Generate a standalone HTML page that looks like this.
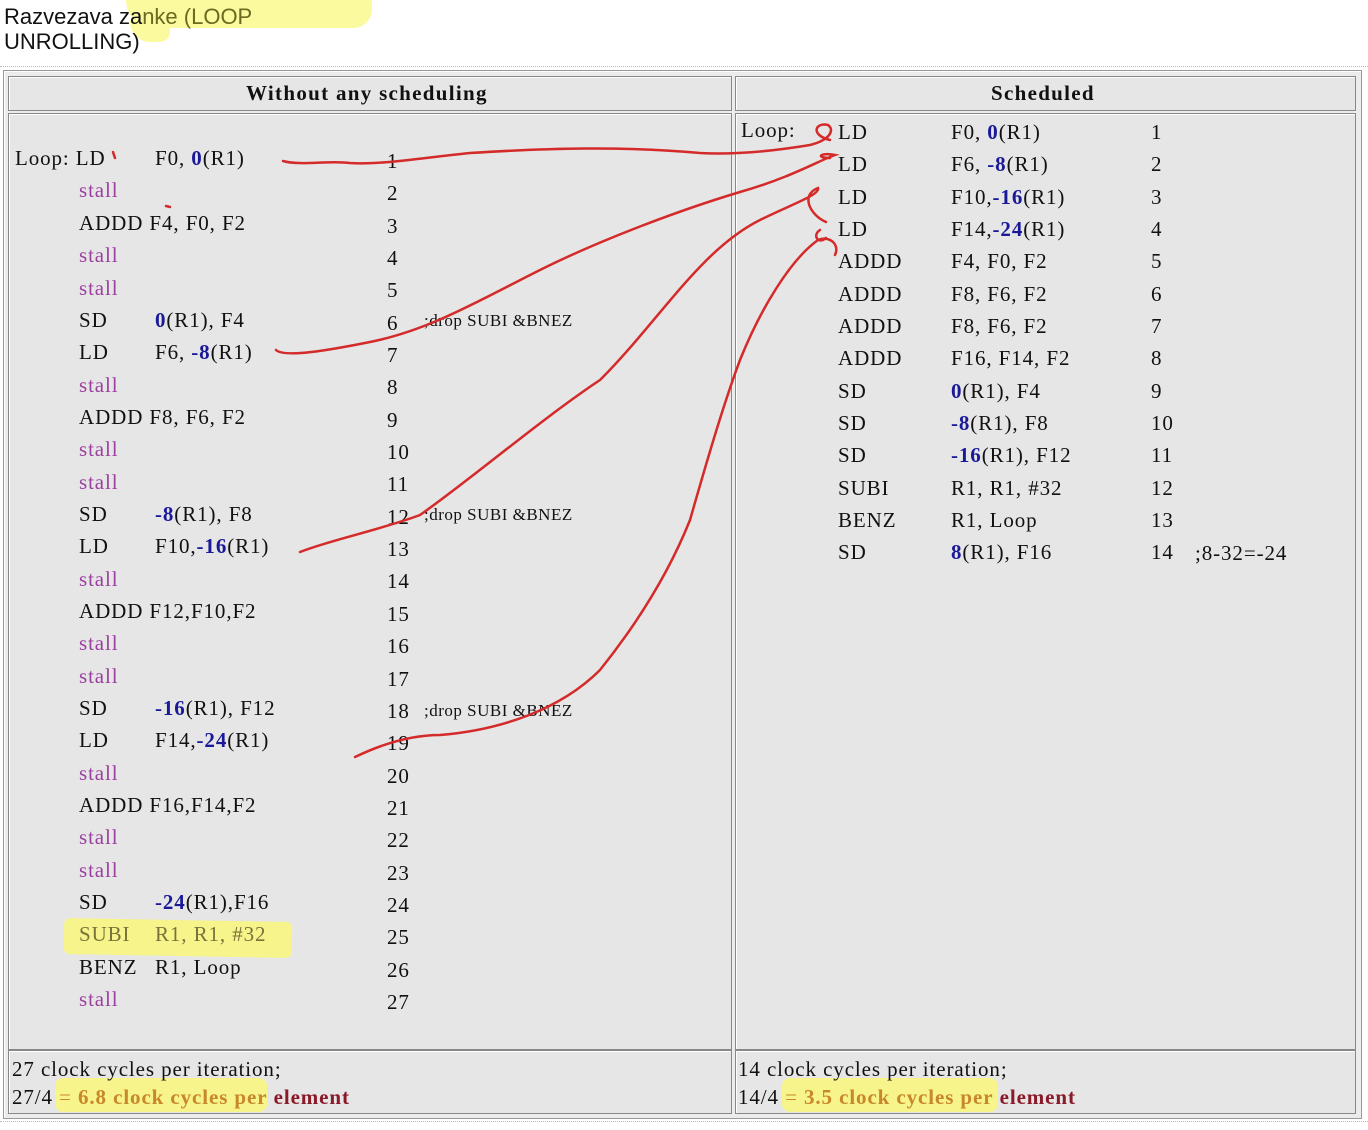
<!DOCTYPE html>
<html><head><meta charset="utf-8"><style>
body{margin:0;width:1368px;height:1130px;background:#fff;position:relative;overflow:hidden;font-family:"Liberation Serif",serif;color:#111}
.a{position:absolute;white-space:nowrap;font-size:21px;line-height:26px;letter-spacing:0.9px}
.s{color:#9b3fa0}.b{color:#1a1a99;font-weight:bold}
.box{position:absolute;background:#e6e6e6;border:1px solid #888;box-shadow:inset 1px 1px 0 #fff}
</style></head><body>
<div style="position:absolute;left:126px;top:0;width:246px;height:28px;background:#fbfa9e;border-radius:0 0 20px 30px"></div>
<div style="position:absolute;left:130px;top:20px;width:40px;height:22px;background:#fbfa9e;border-radius:0 0 10px 20px"></div>
<div class="a" style="left:4px;top:4px;font-family:'Liberation Sans',sans-serif;font-size:22px;line-height:25px;letter-spacing:0">Razvezava za<span style="color:#6a6a20">nke (LOOP</span><br>UNROLLING)</div>
<div style="position:absolute;left:0;top:66px;width:1368px;border-top:1px dotted #bbb"></div>
<div style="position:absolute;left:0;top:1121px;width:1368px;border-top:1px dotted #bbb"></div>
<div class="box" style="left:3px;top:70px;width:1357px;height:1047px;background:#ececec;border-color:#999"></div>
<div class="box" style="left:8px;top:76px;width:722px;height:33px"></div>
<div class="box" style="left:735px;top:76px;width:619px;height:33px"></div>
<div class="box" style="left:8px;top:113px;width:722px;height:935px"></div>
<div class="box" style="left:735px;top:113px;width:619px;height:935px"></div>
<div class="box" style="left:8px;top:1050px;width:722px;height:62px"></div>
<div class="box" style="left:735px;top:1050px;width:619px;height:62px"></div>
<div class="a" style="left:246px;top:80px;font-weight:bold;letter-spacing:1.3px">Without any scheduling</div>
<div class="a" style="left:991px;top:80px;font-weight:bold;letter-spacing:1.3px">Scheduled</div>
<div style="position:absolute;left:64px;top:920px;width:228px;height:36px;background:#f6f48a;border-radius:6px;transform:rotate(1deg)"></div>
<div style="position:absolute;left:55px;top:1078px;width:212px;height:34px;background:#f6f48a;border-radius:8px"></div>
<div style="position:absolute;left:782px;top:1078px;width:216px;height:34px;background:#f6f48a;border-radius:8px"></div>
<div class="a" style="left:15px;top:145px">Loop: LD</div>
<div class="a" style="left:155px;top:145px">F0, <span class="b">0</span>(R1)</div>
<div class="a s" style="left:79px;top:177px">stall</div>
<div class="a" style="left:79px;top:210px">ADDD F4, F0, F2</div>
<div class="a s" style="left:79px;top:242px">stall</div>
<div class="a s" style="left:79px;top:275px">stall</div>
<div class="a" style="left:79px;top:307px">SD</div><div class="a" style="left:155px;top:307px"><span class="b">0</span>(R1), F4</div>
<div class="a" style="left:79px;top:339px">LD</div><div class="a" style="left:155px;top:339px">F6, <span class="b">-8</span>(R1)</div>
<div class="a s" style="left:79px;top:372px">stall</div>
<div class="a" style="left:79px;top:404px">ADDD F8, F6, F2</div>
<div class="a s" style="left:79px;top:436px">stall</div>
<div class="a s" style="left:79px;top:469px">stall</div>
<div class="a" style="left:79px;top:501px">SD</div><div class="a" style="left:155px;top:501px"><span class="b">-8</span>(R1), F8</div>
<div class="a" style="left:79px;top:533px">LD</div><div class="a" style="left:155px;top:533px">F10,<span class="b">-16</span>(R1)</div>
<div class="a s" style="left:79px;top:566px">stall</div>
<div class="a" style="left:79px;top:598px">ADDD F12,F10,F2</div>
<div class="a s" style="left:79px;top:630px">stall</div>
<div class="a s" style="left:79px;top:663px">stall</div>
<div class="a" style="left:79px;top:695px">SD</div><div class="a" style="left:155px;top:695px"><span class="b">-16</span>(R1), F12</div>
<div class="a" style="left:79px;top:727px">LD</div><div class="a" style="left:155px;top:727px">F14,<span class="b">-24</span>(R1)</div>
<div class="a s" style="left:79px;top:760px">stall</div>
<div class="a" style="left:79px;top:792px">ADDD F16,F14,F2</div>
<div class="a s" style="left:79px;top:824px">stall</div>
<div class="a s" style="left:79px;top:857px">stall</div>
<div class="a" style="left:79px;top:889px">SD</div><div class="a" style="left:155px;top:889px"><span class="b">-24</span>(R1),F16</div>
<div class="a" style="left:79px;top:921px;color:#77733a">SUBI</div><div class="a" style="left:155px;top:921px;color:#77733a">R1, R1, #32</div>
<div class="a" style="left:79px;top:954px">BENZ</div><div class="a" style="left:155px;top:954px">R1, Loop</div>
<div class="a s" style="left:79px;top:986px">stall</div>
<div class="a" style="left:387px;top:145px;line-height:32.35px">1<br>2<br>3<br>4<br>5<br>6<br>7<br>8<br>9<br>10<br>11<br>12<br>13<br>14<br>15<br>16<br>17<br>18<br>19<br>20<br>21<br>22<br>23<br>24<br>25<br>26<br>27</div>
<div class="a" style="left:424px;top:308px;font-size:17px;letter-spacing:0.5px">;drop SUBI &amp;BNEZ</div>
<div class="a" style="left:424px;top:502px;font-size:17px;letter-spacing:0.5px">;drop SUBI &amp;BNEZ</div>
<div class="a" style="left:424px;top:698px;font-size:17px;letter-spacing:0.5px">;drop SUBI &amp;BNEZ</div>
<div class="a" style="left:741px;top:117px">Loop:</div>
<div class="a" style="left:838px;top:116px;line-height:32.35px">LD<br>LD<br>LD<br>LD<br>ADDD<br>ADDD<br>ADDD<br>ADDD<br>SD<br>SD<br>SD<br>SUBI<br>BENZ<br>SD</div>
<div class="a" style="left:951px;top:116px;line-height:32.35px">F0, <span class="b">0</span>(R1)<br>F6, <span class="b">-8</span>(R1)<br>F10,<span class="b">-16</span>(R1)<br>F14,<span class="b">-24</span>(R1)<br>F4, F0, F2<br>F8, F6, F2<br>F8, F6, F2<br>F16, F14, F2<br><span class="b">0</span>(R1), F4<br><span class="b">-8</span>(R1), F8<br><span class="b">-16</span>(R1), F12<br>R1, R1, #32<br>R1, Loop<br><span class="b">8</span>(R1), F16</div>
<div class="a" style="left:1151px;top:116px;line-height:32.35px">1<br>2<br>3<br>4<br>5<br>6<br>7<br>8<br>9<br>10<br>11<br>12<br>13<br>14</div>
<div class="a" style="left:1195px;top:540px">;8-32=-24</div>
<div class="a" style="left:12px;top:1055px;line-height:28px">27 clock cycles per iteration;<br>27/4 <span style="color:#c8872a;font-weight:bold"><span style="font-weight:normal">=</span> 6.8 clock cycles per</span> <b style="color:#8a1a2a">element</b></div>
<div class="a" style="left:738px;top:1055px;line-height:28px">14 clock cycles per iteration;<br>14/4 <span style="color:#c8872a;font-weight:bold"><span style="font-weight:normal">=</span> 3.5 clock cycles per</span> <b style="color:#8a1a2a">element</b></div>
<svg style="position:absolute;left:0;top:0" width="1368" height="1130" fill="none" stroke="#d42a2a" stroke-width="2.5" stroke-linecap="round">
<path d="M283 161 C300 166 330 160 350 163 C380 165 420 158 470 153 C550 148 620 146 700 153 C740 155 780 150 810 145 C830 140 835 130 828 125 C815 122 810 135 830 140"/>
<path d="M276 350 C285 358 330 350 370 342 C430 330 480 300 540 270 C600 240 680 210 740 192 C790 178 820 160 835 155 C820 152 815 158 830 158"/>
<path d="M300 552 C330 540 380 530 420 515 C470 480 540 420 600 380 C660 320 700 250 760 220 C790 205 820 195 818 188 C800 195 810 215 826 222"/>
<path d="M355 757 C380 745 410 735 440 735 C500 730 560 710 600 670 C640 620 670 570 690 520 C710 450 725 400 740 360 C760 310 790 260 818 240 C830 235 840 245 835 255"/>
<path d="M820 230 C812 235 818 245 826 238"/>
<path d="M113 152 L115 158"/><path d="M166 206 L170 207"/>
</svg>
</body></html>
